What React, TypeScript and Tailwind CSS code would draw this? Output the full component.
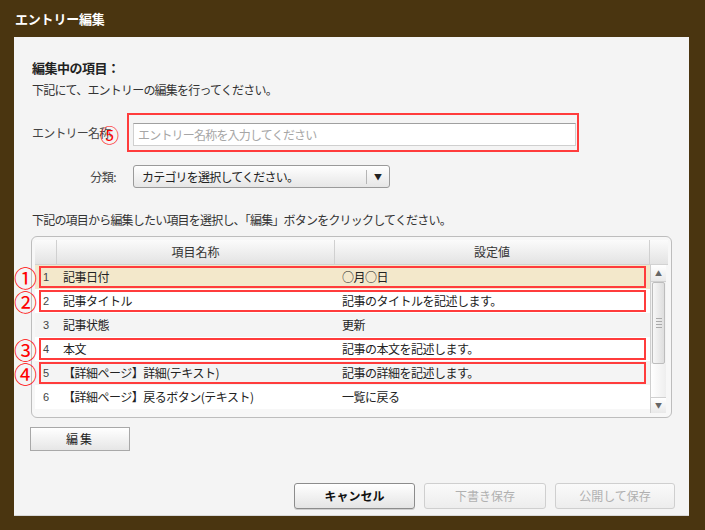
import React from 'react';

type Row = { no: number; name: string; value: string; mark?: string };

const rows: Row[] = [
    { no: 1, name: '記事日付', value: '○月○日', mark: '①' },
    { no: 2, name: '記事タイトル', value: '記事のタイトルを記述します。', mark: '②' },
    { no: 3, name: '記事状態', value: '更新' },
    { no: 4, name: '本文', value: '記事の本文を記述します。', mark: '③' },
    { no: 5, name: '【詳細ページ】詳細(テキスト)', value: '記事の詳細を記述します。', mark: '④' },
    { no: 6, name: '【詳細ページ】戻るボタン(テキスト)', value: '一覧に戻る' },
];

function rowBg(i: number) {
    if (i === 0) return 'bg-[#f3e8cb]';
    return i % 2 === 0 ? 'bg-[#f4f4f4]' : 'bg-white';
}

function Scrollbar() {
    return (
        <div className="w-[16px] h-full flex flex-col bg-[#f2f2f2] border-l border-[#cfcfcf]">
            <div className="h-[17px] flex items-center justify-center bg-gradient-to-b from-white to-[#e9e9e9] border-b border-[#d0d0d0]">
                <span className="text-[7px] leading-none text-[#666]">▲</span>
            </div>
            <div className="h-[82px] mx-[1px] flex items-center justify-center bg-gradient-to-r from-[#f7f7f7] to-[#dedede] border border-[#bdbdbd] rounded-[2px]">
                <div className="flex flex-col gap-[2px]">
                    <div className="w-[6px] h-px bg-[#aaa]" />
                    <div className="w-[6px] h-px bg-[#aaa]" />
                    <div className="w-[6px] h-px bg-[#aaa]" />
                    <div className="w-[6px] h-px bg-[#aaa]" />
                </div>
            </div>
            <div className="flex-1 bg-gradient-to-r from-[#ffffff] to-[#eeeeee]" />
            <div className="h-[16px] flex items-center justify-center bg-gradient-to-b from-white to-[#e9e9e9] border-t border-[#d0d0d0]">
                <span className="text-[7px] leading-none text-[#666]">▼</span>
            </div>
        </div>
    );
}

function Btn({ label, disabled, bold, w }: { label: string; disabled?: boolean; bold?: boolean; w: string }) {
    return (
        <button
            className={`${w} h-[26px] rounded-[3px] border text-[12px] ${
                disabled
                    ? 'border-[#cfcfcf] text-[#b0b0b0] bg-gradient-to-b from-[#fafafa] to-[#ededed]'
                    : 'border-[#8c8c8c] text-[#111] bg-gradient-to-b from-white to-[#e4e4e4] shadow-[0_1px_0_#cfcfcf]'
            } ${bold ? 'font-bold' : ''}`}
        >
            {label}
        </button>
    );
}

export default function App() {
    return (
        <div className="w-[705px] h-[530px] bg-[#4a3510] flex flex-col font-['Noto_Sans_CJK_JP',sans-serif]">
            <div className="h-[37px] flex items-center pl-[15px] text-white font-bold text-[13px] tracking-[-0.2px]">
                エントリー編集
            </div>

            <div className="flex-1 ml-[14px] mr-[16px] mb-[14px] bg-[#f4f4f4] border-b border-[#d8d8d8] relative flex flex-col pl-[18px] pr-[16px]">
                <div className="pt-[22px] h-[40px] leading-[18px] text-[13px] font-bold text-[#222] tracking-[-0.5px]">
                    編集中の項目：
                </div>
                <div className="mt-[4px] leading-[18px] text-[12px] text-[#333] tracking-[-0.8px]">
                    下記にて、エントリーの編集を行ってください。
                </div>

                {/* entry name */}
                <div className="mt-[14px] flex items-center h-[39px]">
                    <div className="w-[95px] text-[12px] text-[#444] tracking-[-0.8px] relative">
                        エントリー名称
                        <span className="absolute left-[68px] top-[2px] h-[18px] flex items-center text-[19px] leading-none text-[#ff0000]">⑤</span>
                    </div>
                    <div className="w-[452px] h-[39px] border-2 border-[#ff3c3c] pt-[8px] pb-[4px] pl-[4px] pr-[1px]">
                        <div className="h-full bg-white border border-[#cfcfcf] border-t-[#a0a0a0] flex items-center pl-[4px] text-[12px] text-[#a6a6a6] tracking-[-0.8px]">
                            エントリー名称を入力してください
                        </div>
                    </div>
                </div>

                {/* category */}
                <div className="mt-[13px] flex items-center h-[23px]">
                    <div className="w-[84px] text-right text-[12px] text-[#444] tracking-[-0.5px]">分類:</div>
                    <div className="ml-[17px] w-[257px] h-[23px] rounded-[3px] border border-[#9a9a9a] bg-gradient-to-b from-white to-[#e6e6e6] flex items-center">
                        <div className="flex-1 pl-[8px] text-[12px] text-[#222] tracking-[-0.8px]">カテゴリを選択してください。</div>
                        <div className="w-px h-[14px] bg-[#b5b5b5]" />
                        <div className="w-[22px] flex items-center justify-center text-[8px] text-[#222]">▼</div>
                    </div>
                </div>

                <div className="mt-[23px] leading-[18px] text-[12px] text-[#333] tracking-[-0.8px]">
                    下記の項目から編集したい項目を選択し、「編集」ボタンをクリックしてください。
                </div>

                {/* table */}
                <div className="mt-[7px] -ml-[1px] w-[641px] h-[182px] border border-[#bdbdbd] rounded-[6px] bg-[#f7f7f7] p-[3px] relative">
                    <div className="h-[25px] flex bg-gradient-to-b from-[#fbfbfb] to-[#e3e3e3] border-b border-[#d2d2d2] text-[12px] text-[#333]">
                        <div className="w-[22px] border-r border-[#d0d0d0]" />
                        <div className="w-[278px] border-r border-[#d0d0d0] flex items-center justify-center">項目名称</div>
                        <div className="w-[315px] border-r border-[#d0d0d0] flex items-center justify-center">設定値</div>
                        <div className="flex-1" />
                    </div>
                    <div className="flex h-[148px]">
                        <div className="w-[615px] flex flex-col">
                            {rows.map((r, i) => (
                                <div key={r.no} className={`relative h-[24px] flex items-center text-[12px] text-[#222] ${rowBg(i)}`}>
                                    <div className="w-[22px] text-center text-[11px] text-[#444] font-['Liberation_Sans',sans-serif]">{r.no}</div>
                                    <div className="w-[278px] pl-[6px] tracking-[-0.5px] whitespace-nowrap">{r.name}</div>
                                    <div className="flex-1 pl-[7px] tracking-[-0.5px] whitespace-nowrap">{r.value}</div>
                                    {r.mark && (
                                        <>
                                            <span className="absolute left-[4px] right-[4px] top-[1px] bottom-[1px] border-2 border-[#ff3c3c]" />
                                            <span className="absolute left-[-21px] top-[2px] h-[20px] flex items-center text-[23px] leading-none text-[#ff0000]">{r.mark}</span>
                                        </>
                                    )}
                                </div>
                            ))}
                        </div>
                        <Scrollbar />
                    </div>
                </div>

                <div className="mt-[7px]">
                    <button className="-ml-[2px] w-[100px] h-[24px] border border-[#a8a8a8] bg-gradient-to-b from-white to-[#e6e6e6] text-[12px] text-[#222] tracking-[2px]">
                        編集
                    </button>
                </div>

                <div className="mt-[32px] flex justify-end gap-[9px] -mr-[2px]">
                    <Btn label="キャンセル" bold w="w-[121px]" />
                    <Btn label="下書き保存" disabled w="w-[122px]" />
                    <Btn label="公開して保存" disabled w="w-[120px]" />
                </div>
            </div>
        </div>
    );
}
